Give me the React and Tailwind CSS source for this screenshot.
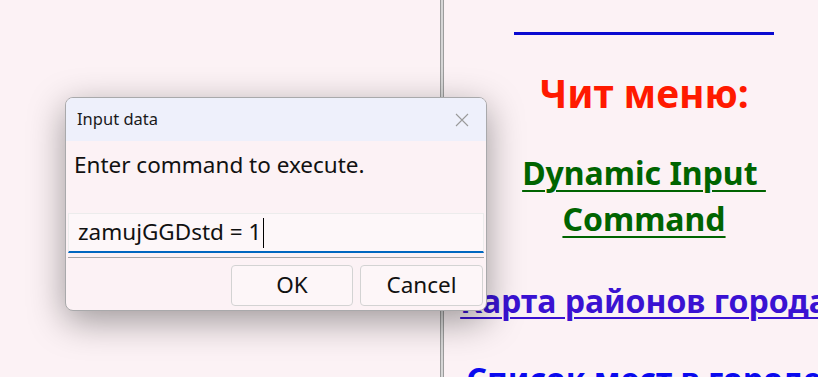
import React from "react";

const CloseIcon = () => (
  <svg width="14" height="14" viewBox="0 0 14 14" fill="none">
    <path d="M1 1L13 13M13 1L1 13" stroke="#9a9a9a" strokeWidth="1.1" />
  </svg>
);

const InputDialog = () => {
  return (
    <div className="absolute left-[65px] top-[97px] w-[422px] h-[214px] rounded-lg border border-[#a9a9ab] bg-[#fcf2f5] shadow-[0_10px_36px_rgba(0,0,0,0.38)] overflow-hidden flex flex-col font-['Noto_Sans',sans-serif]">
      <div className="h-[43px] bg-[#eef0fb] flex items-center justify-between pl-[11px] pr-[17px] shrink-0">
        <span className="text-[16.5px] text-[#1a1a1a]">Input data</span>
        <CloseIcon />
      </div>
      <div className="pl-[8px] pt-[9px] text-[22.5px] text-[#111] leading-[30px]">
        Enter command to execute.
      </div>
      <div className="mt-[33px] mx-[2px]">
        <div className="h-[40px] bg-[#fdf7f9] border-t border-x border-[#ececec] border-b-2 border-b-[#0067c0] flex items-center pl-[9px]">
          <span className="text-[22.5px] text-[#111] leading-none">zamujGGDstd = 1</span>
          <span className="ml-[2px] w-px h-[30px] bg-black" />
        </div>
        <div className="mt-[4px] h-px bg-[#a5a5a5]" />
      </div>
      <div className="flex justify-end gap-[7px] pr-[3px] mt-[7px]">
        <button className="w-[122px] h-[41px] rounded-[4px] border border-[#d3d3d3] bg-[#fdf6f8] text-[22.5px] leading-none text-[#111]">
          OK
        </button>
        <button className="w-[123px] h-[41px] rounded-[4px] border border-[#d3d3d3] bg-[#fdf6f8] text-[22.5px] leading-none text-[#111]">
          Cancel
        </button>
      </div>
    </div>
  );
};

export default function App() {
  return (
    <div className="relative w-[818px] h-[377px] overflow-hidden bg-[#fcf2f5] flex font-['Noto_Sans',sans-serif]">
      <div className="w-[440px] shrink-0" />
      <div className="w-[4px] shrink-0 flex">
        <div className="w-px bg-[#9c9c9c]" />
        <div className="w-[2px] bg-[#d6d6d6]" />
        <div className="w-px bg-[#9c9c9c]" />
      </div>
      <div className="w-[400px] shrink-0 flex flex-col items-center">
        <hr className="mt-[32px] w-[260px] border-0 border-t-[3px] border-solid border-[#0a0ad0]" />
        <h1 className="mt-[33px] text-[39px] leading-[50px] font-bold text-[#ff1a00]">
          Чит меню:
        </h1>
        <a className="mt-[32px] text-center text-[32px] leading-[46px] font-bold text-[#006400] underline underline-offset-[5px] decoration-2 w-[260px]">
          Dynamic Input&nbsp; Command
        </a>
        <a className="mt-[38px] whitespace-nowrap text-[32px] leading-[42px] font-bold text-[#3a12d2] underline underline-offset-[4px] decoration-2">
          Карта районов города
        </a>
        <a className="mt-[36px] whitespace-nowrap text-[32px] leading-[42px] font-bold text-[#0a0aee] underline underline-offset-[4px] decoration-2">
          Список мест в городе
        </a>
      </div>
      <InputDialog />
    </div>
  );
}
